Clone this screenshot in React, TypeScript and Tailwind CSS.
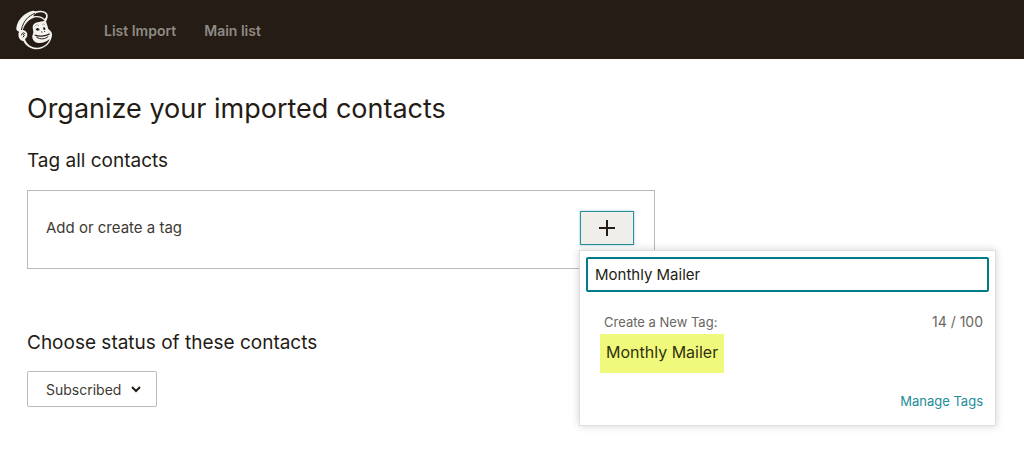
import { useState } from "react";

const MAX_TAG_LENGTH = 100;

function Logo() {
  return (
    <svg viewBox="42 27 120 123" className="h-[41px] w-10" role="img" aria-label="Mailchimp">
      {/* head outline */}
      <path
        d="M49 84C52 65 63 50 80 40C91 33 100 30 107 34C119 30 141 33 143 45C144 52 141 59 138 65C142 74 143 81 145 87C155 93 158 101 155 112C150 132 133 147 111 148C93 148 77 138 70 123C58 121 52 107 57 95C51 93 48 90 49 84Z"
        fill="#f4f2ee"
      />
      {/* hair */}
      <path
        d="M68 90C74 72 86 58 102 53C115 50 129 55 134 63C127 63 119 66 112 67C102 69 98 75 98 82C98 90 102 95 99 102C95 108 96 118 104 125C113 132 134 131 149 117C143 133 129 143 111 143C93 143 80 133 75 117C84 113 84 97 76 93C73 91 70 91 68 90Z"
        fill="#241c15"
      />
      {/* cap seam and visor */}
      <path d="M105 40C86 47 70 62 64 90" fill="none" stroke="#241c15" strokeWidth="3" />
      <path d="M110 39C122 34 137 37 138 46C139 50 137 54 134 57C126 50 116 46 102 49C97 50 103 42 110 39Z" fill="#241c15" />
      {/* ear */}
      <path d="M65 106C65 98 73 96 75 102M69 103L73 106L69 112" fill="none" stroke="#241c15" strokeWidth="3" />
      {/* brows, eyes, nose and mouth */}
      <path d="M104 79C107 74 112 73 117 77M126 74C130 70 134 72 135 76" fill="none" stroke="#8b857d" strokeWidth="2" />
      <path d="M107 89C109 82 117 82 119 90L113 92ZM129 83C133 80 137 83 136 89L131 90Z" fill="#241c15" />
      <path d="M123 95L127 97M132 94L135 95" stroke="#241c15" strokeWidth="2.5" />
      <path d="M104 105C116 110 136 110 149 101" fill="none" stroke="#241c15" strokeWidth="3.5" />
      <path d="M109 111C122 120 137 117 145 109" fill="none" stroke="#241c15" strokeWidth="3" />
    </svg>
  );
}

function Header() {
  return (
    <header className="flex h-[59px] items-center bg-[#241c15] pl-[14px]">
      <a href="#home" className="shrink-0">
        <Logo />
      </a>
      <nav className="ml-[50px] flex gap-7 pt-0.5 text-[14px] font-semibold text-[#8f8a84]">
        <a href="#import">List Import</a>
        <a href="#main">Main list</a>
      </nav>
    </header>
  );
}

function TagMenu() {
  const [tag, setTag] = useState("Monthly Mailer");

  return (
    <div className="absolute top-full -left-px z-10 mt-[5px] w-[417px] border border-[#dedede] bg-white px-1.5 pt-1.5 pb-3.5 shadow-[0_0_8px_rgba(0,0,0,0.18)]">
      <input
        type="text"
        aria-label="Tag name"
        value={tag}
        maxLength={MAX_TAG_LENGTH}
        onChange={(event) => setTag(event.target.value)}
        className="block h-[35px] w-full rounded-xs border-2 border-[#007c89] bg-white px-[7px] text-[15px] text-[#241c15] outline-none"
      />
      <div className="mt-5 flex items-center justify-between pr-1.5 pl-[18px] text-[13px] leading-5 text-[#6b6661]">
        <span>Create a New Tag:</span>
        <span className="text-[14px]">
          {tag.length} / {MAX_TAG_LENGTH}
        </span>
      </div>
      <button
        type="button"
        className="mt-0.5 ml-3.5 block h-[39px] bg-[#effa7c] px-1.5 pb-1 text-[16px] text-[#33300f]"
      >
        {tag}
      </button>
      <div className="mt-[18px] flex justify-end pr-1.5 text-[13px] leading-5 text-[#1c8d99]">
        <a href="#tags">Manage Tags</a>
      </div>
    </div>
  );
}

export default function App() {
  return (
    <div className="min-h-screen bg-white font-['Inter',sans-serif] text-[#241c15]">
      <Header />
      <main className="px-[27px] pt-8 pb-12">
        <h1 className="text-[27px] leading-9">Organize your imported contacts</h1>

        <section>
          <h2 className="mt-5 text-[19px] leading-7">Tag all contacts</h2>
          <div className="mt-[15px] flex max-w-[628px] items-center justify-between border border-[#b9b9b9] pt-5 pr-5 pb-[23px] pl-[18px]">
            <span className="text-[15px] text-[#403a34]">Add or create a tag</span>
            <div className="relative">
              <button
                type="button"
                aria-label="Add tag"
                className="flex h-[34px] w-[54px] items-center justify-center border border-[#2b929d] bg-[#efeeea] shadow-[0_0_2px_rgba(0,124,137,0.5)]"
              >
                <svg viewBox="0 0 16 16" className="size-4" fill="none" stroke="#241c15" strokeWidth="2">
                  <path d="M8 0V16M0 8H16" />
                </svg>
              </button>
              <TagMenu />
            </div>
          </div>
        </section>

        <section>
          <h2 className="mt-[60px] text-[19px] leading-7">Choose status of these contacts</h2>
          <div className="relative mt-3.5 w-[130px]">
            <select
              aria-label="Contact status"
              className="h-9 w-full appearance-none rounded-xs border border-[#b9b9b9] bg-white pl-[18px] text-[14px] text-[#403a34]"
            >
              <option>Subscribed</option>
              <option>Unsubscribed</option>
              <option>Cleaned</option>
            </select>
            <svg
              viewBox="0 0 10 8"
              className="pointer-events-none absolute inset-y-0 right-4 my-auto h-2 w-2.5"
              fill="none"
              stroke="#241c15"
              strokeWidth="2"
            >
              <path d="M1 2L5 6L9 2" />
            </svg>
          </div>
        </section>
      </main>
    </div>
  );
}
